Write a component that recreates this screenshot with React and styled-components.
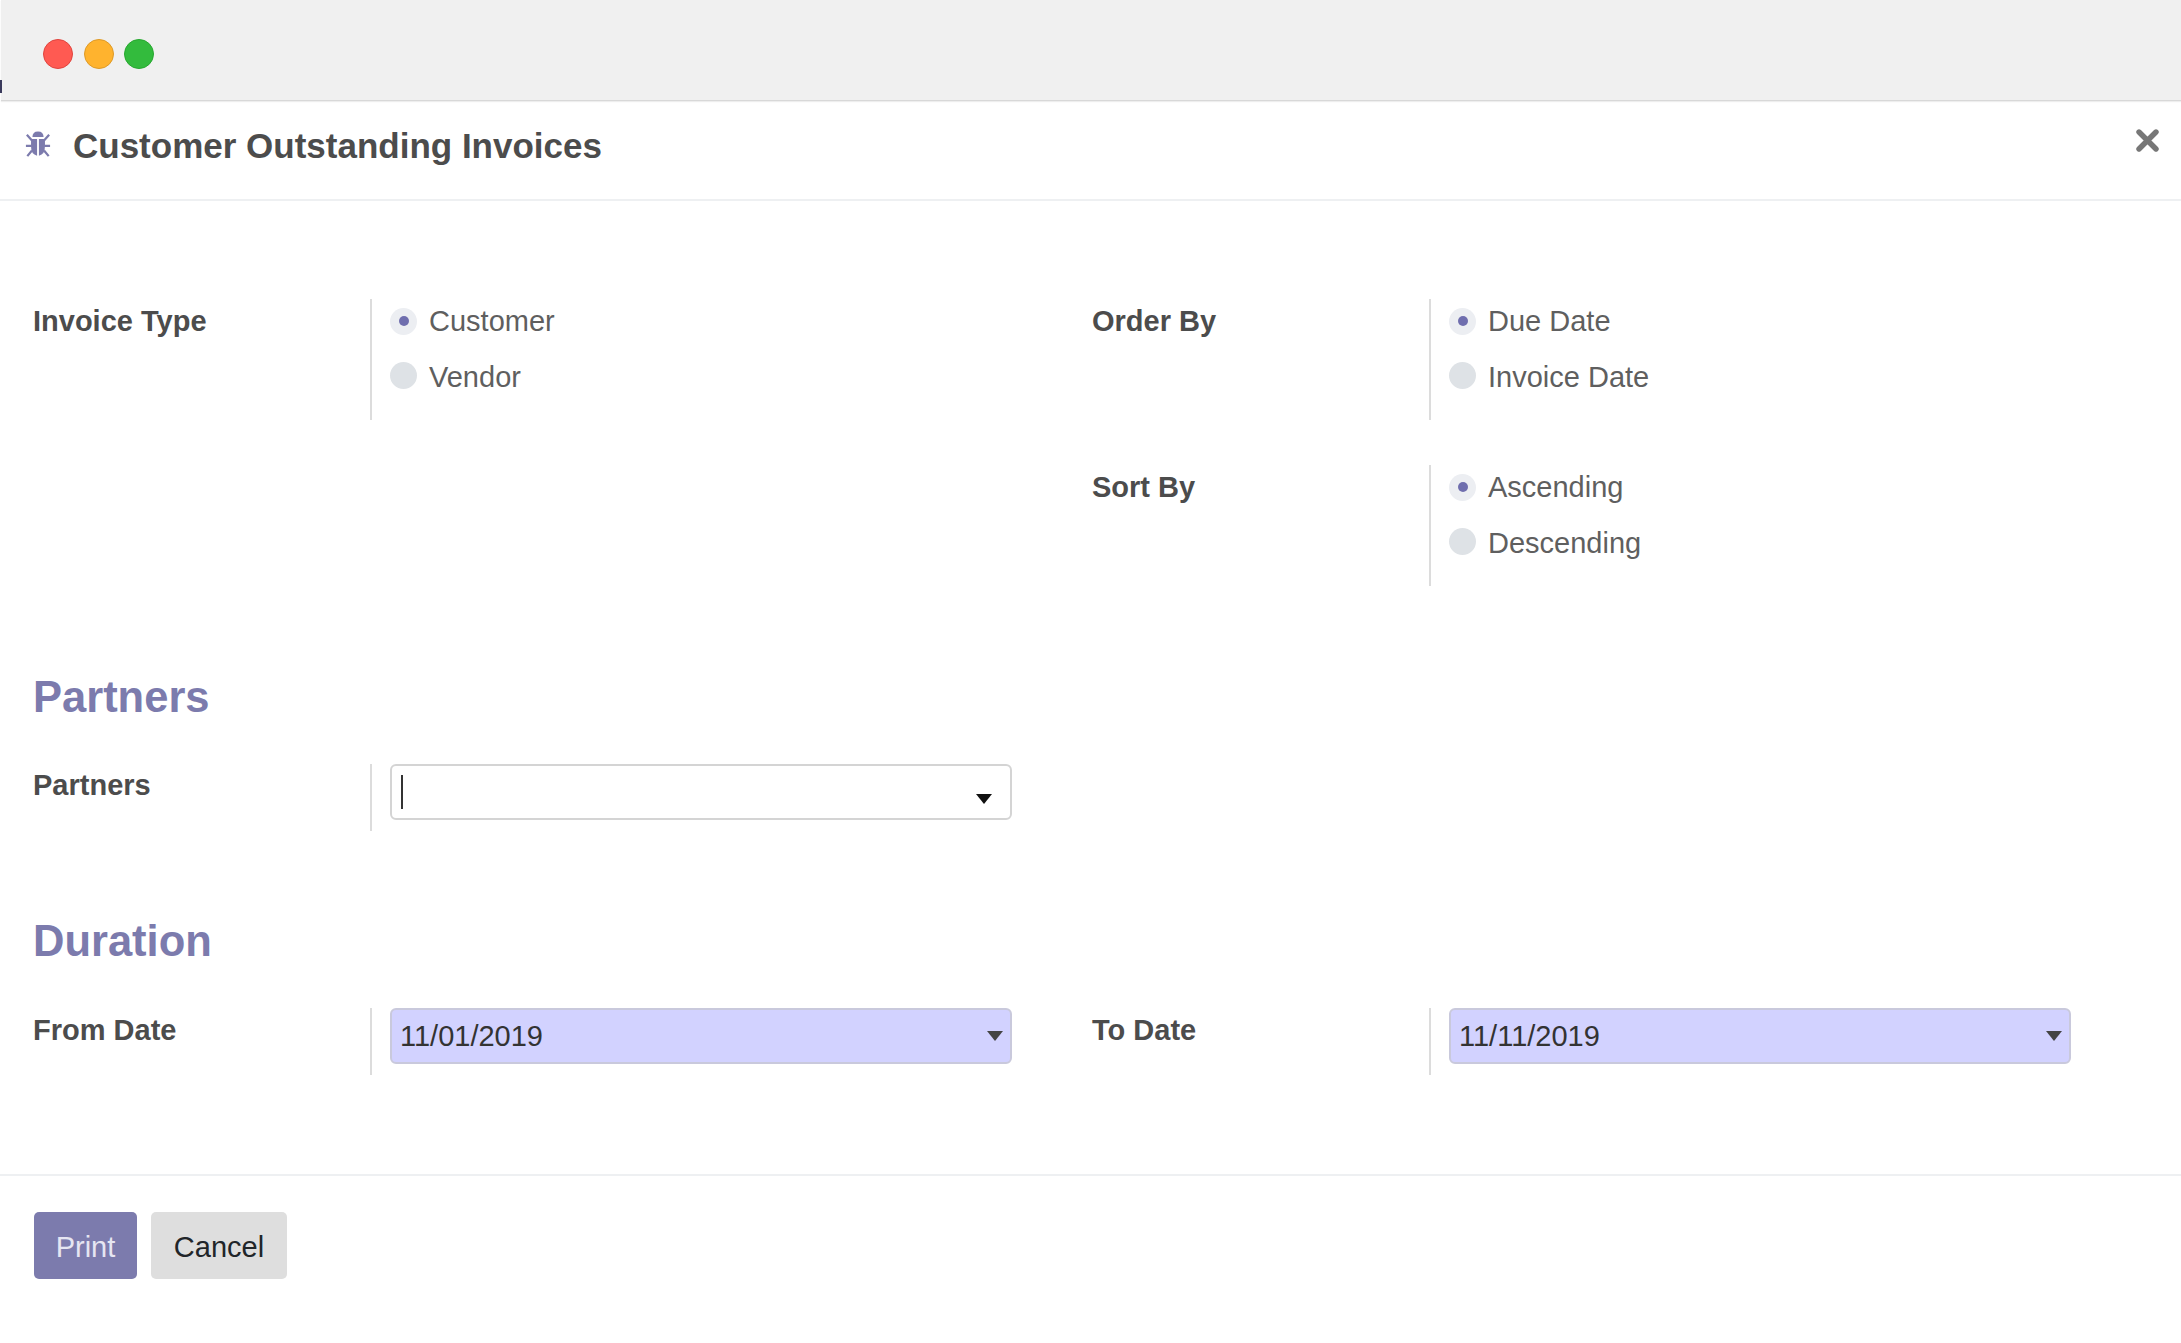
import React from "react";
import styled, { createGlobalStyle } from "styled-components";

const Global = createGlobalStyle`
  html, body { margin: 0; padding: 0; background: #fff; }
  body { font-family: "Liberation Sans", Arial, sans-serif; color: #4c4c4c; }
`;

const Page = styled.div`
  width: 2181px;
  height: 1343px;
  display: flex;
  flex-direction: column;
  overflow: hidden;
  background: #fff;
`;

const WindowBar = styled.div`
  position: relative;
  height: 101px;
  box-sizing: border-box;
  margin-left: 1px;
  padding: 39px 0 0 42px;
  display: flex;
  gap: 10.5px;
  background: #f0f0f0;
  border-bottom: 1px solid #d8d8d8;
  box-shadow: 0 1px 1px #eeeeee;
`;

const EdgeMark = styled.span`
  position: absolute;
  left: -1px;
  top: 80px;
  width: 2px;
  height: 13px;
  background: #3a3a5c;
`;

const Dot = styled.span`
  width: 30px;
  height: 30px;
  box-sizing: border-box;
  border-radius: 50%;
  background: ${(p) => p.$fill};
  border: 1px solid ${(p) => p.$edge};
`;

const Header = styled.header`
  height: 100px;
  box-sizing: border-box;
  padding: 0 22px 0 25px;
  display: flex;
  align-items: flex-start;
  border-bottom: 2px solid #eef0f2;
`;

const BugIcon = styled.svg`
  width: 26px;
  height: 27px;
  margin-top: 30px;
  flex: none;
`;

const Title = styled.h1`
  margin: 21px 0 0 22px;
  font-size: 35px;
  line-height: 48px;
  font-weight: 700;
  color: #4c4c4c;
  flex: 1;
`;

const CloseIcon = styled.svg`
  width: 23px;
  height: 23px;
  margin-top: 28px;
  flex: none;
`;

const Form = styled.main`
  flex: 1;
  box-sizing: border-box;
  padding: 98px 0 0 33px;
  display: flex;
  flex-direction: column;
`;

const TwoCols = styled.div`
  display: grid;
  grid-template-columns: 1059px 979px;
  align-content: start;
  margin-top: ${(p) => p.$top || 0}px;
`;

const Stack = styled.div`
  display: flex;
  flex-direction: column;
  gap: 45px;
`;

const Row = styled.div`
  display: grid;
  grid-template-columns: 337px 642px;
  align-items: start;
`;

const Label = styled.label`
  font-size: 29px;
  line-height: 34px;
  font-weight: 700;
  color: #4c4c4c;
  padding-top: ${(p) => p.$top ?? 5}px;
`;

const Field = styled.div`
  box-sizing: border-box;
  border-left: 2px solid #dcdcdc;
  padding-left: 18px;
  height: ${(p) => p.$h}px;
`;

const RadioRow = styled.div`
  display: flex;
  align-items: center;
  height: 56px;
  gap: 12px;
  font-size: 29px;
  color: #5f5f5f;
`;

const RadioGroup = styled.div`
  display: flex;
  flex-direction: column;
  margin-top: -6px;
`;

const RadioMark = styled.span`
  width: 27px;
  height: 27px;
  margin-top: ${(p) => (p.$on ? 0 : -3)}px;
  border-radius: 50%;
  background: ${(p) => (p.$on ? "#eceef2" : "#dee2e6")};
  display: flex;
  align-items: center;
  justify-content: center;
  flex: none;
  &::after {
    content: "";
    width: 10px;
    height: 10px;
    border-radius: 50%;
    background: ${(p) => (p.$on ? "#6f6eae" : "transparent")};
  }
`;

const Heading = styled.h2`
  margin: ${(p) => p.$top}px 0 -1px;
  font-size: 43.5px;
  line-height: 50px;
  font-weight: 700;
  color: #7c7bad;
`;

const Input = styled.div`
  box-sizing: border-box;
  width: 622px;
  height: 56px;
  border: 2px solid ${(p) => (p.$filled ? "#c9c9dc" : "#d4d4d4")};
  border-radius: 6px;
  background: ${(p) => (p.$filled ? "#d2d2ff" : "#fff")};
  display: flex;
  align-items: center;
  justify-content: space-between;
  padding: 0 ${(p) => (p.$filled ? 7 : 18)}px 0 8px;
  font-size: 29px;
  color: #333;
`;

const Cursor = styled.span`
  width: 2px;
  height: 34px;
  margin-left: 1px;
  background: #333;
`;

const Caret = styled.span`
  width: 0;
  height: 0;
  margin-top: ${(p) => p.$mt || 0}px;
  border-left: 8px solid transparent;
  border-right: 8px solid transparent;
  border-top: 10px solid ${(p) => p.$c};
`;

const Footer = styled.footer`
  height: 169px;
  box-sizing: border-box;
  border-top: 2px solid #eef0f2;
  padding: 36px 0 0 34px;
  display: flex;
  align-items: flex-start;
  gap: 14px;
`;

const Button = styled.button`
  height: 67px;
  padding: 3px 0 0;
  width: ${(p) => p.$w}px;
  border: none;
  border-radius: 5px;
  font-family: inherit;
  font-size: 29px;
  background: ${(p) => (p.$primary ? "#7c7bad" : "#dedede")};
  color: ${(p) => (p.$primary ? "#e6e6f2" : "#212529")};
`;

const Radios = ({ options }) => (
  <RadioGroup>
    {options.map((o, i) => (
      <RadioRow key={o}>
        <RadioMark $on={i === 0} />
        {o}
      </RadioRow>
    ))}
  </RadioGroup>
);

export default function App() {
  return (
    <Page>
      <Global />
      <WindowBar>
        <EdgeMark />
        <Dot $fill="#ff5a52" $edge="#e0443e" />
        <Dot $fill="#ffb32e" $edge="#de9a27" />
        <Dot $fill="#33bb3d" $edge="#27a82f" />
      </WindowBar>
      <Header>
        <BugIcon viewBox="0 0 28 28">
          <g fill="#7c7bad">
            <path d="M8 6Q8 0 14 0Q20 0 20 6Z" />
            <path d="M6.5 8H13V26Q6.5 25 6.5 16Z" />
            <path d="M21.5 8H15V26Q21.5 25 21.5 16Z" />
          </g>
          <path
            d="M2 3.5L7.5 9.7M26 3.5L20.5 9.7M1 15.5H7M27 15.5H21M2.5 26.5L7.5 20.5M25.5 26.5L20.5 20.5"
            stroke="#7c7bad"
            strokeWidth="2.4"
            fill="none"
          />
        </BugIcon>
        <Title>Customer Outstanding Invoices</Title>
        <CloseIcon viewBox="0 0 23 23">
          <path d="M3 3L20 20M20 3L3 20" stroke="#777" strokeWidth="5.4" strokeLinecap="round" fill="none" />
        </CloseIcon>
      </Header>
      <Form>
        <TwoCols>
          <Row>
            <Label>Invoice Type</Label>
            <Field $h={121}>
              <Radios options={["Customer", "Vendor"]} />
            </Field>
          </Row>
          <Stack>
            <Row>
              <Label>Order By</Label>
              <Field $h={121}>
                <Radios options={["Due Date", "Invoice Date"]} />
              </Field>
            </Row>
            <Row>
              <Label>Sort By</Label>
              <Field $h={121}>
                <Radios options={["Ascending", "Descending"]} />
              </Field>
            </Row>
          </Stack>
        </TwoCols>
        <Heading $top={86}>Partners</Heading>
        <TwoCols $top={43}>
          <Row>
            <Label $top={4}>Partners</Label>
            <Field $h={67}>
              <Input>
                <Cursor />
                <Caret $c="#111" $mt={14} />
              </Input>
            </Field>
          </Row>
        </TwoCols>
        <Heading $top={85}>Duration</Heading>
        <TwoCols $top={43}>
          <Row>
            <Label>From Date</Label>
            <Field $h={67}>
              <Input $filled>
                11/01/2019
                <Caret $c="#444" />
              </Input>
            </Field>
          </Row>
          <Row>
            <Label>To Date</Label>
            <Field $h={67}>
              <Input $filled>
                11/11/2019
                <Caret $c="#444" />
              </Input>
            </Field>
          </Row>
        </TwoCols>
      </Form>
      <Footer>
        <Button $primary $w={103}>Print</Button>
        <Button $w={136}>Cancel</Button>
      </Footer>
    </Page>
  );
}
